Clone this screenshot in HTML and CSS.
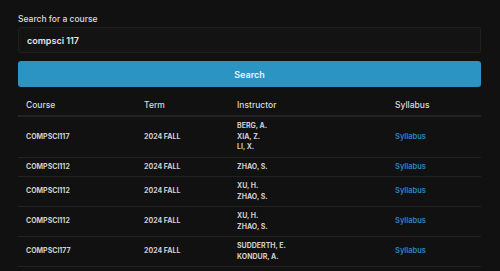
FILE: index.html
```html
<!DOCTYPE html>
<html lang="en">

<head>
  <meta charset="UTF-8">
  <meta name="viewport" content="width=device-width, initial-scale=1.0">
  <title>Course search</title>
  <link rel="stylesheet" href="styles.css">
</head>

<body>
  <div class="wrap">
    <form class="search">
      <label for="q">Search for a course</label>
      <input id="q" type="text" value="compsci 117">
      <button type="button">Search</button>
    </form>

    <table class="results">
      <colgroup>
        <col class="c-course">
        <col class="c-term">
        <col class="c-inst">
        <col class="c-syl">
      </colgroup>
      <thead>
        <tr>
          <th>Course</th>
          <th>Term</th>
          <th>Instructor</th>
          <th>Syllabus</th>
        </tr>
      </thead>
      <tbody>
        <tr>
          <td>COMPSCI117</td>
          <td>2024 FALL</td>
          <td>BERG, A.<br>XIA, Z.<br>LI, X.</td>
          <td><a href="#">Syllabus</a></td>
        </tr>
        <tr>
          <td>COMPSCI112</td>
          <td>2024 FALL</td>
          <td>ZHAO, S.</td>
          <td><a href="#">Syllabus</a></td>
        </tr>
        <tr>
          <td>COMPSCI112</td>
          <td>2024 FALL</td>
          <td>XU, H.<br>ZHAO, S.</td>
          <td><a href="#">Syllabus</a></td>
        </tr>
        <tr>
          <td>COMPSCI112</td>
          <td>2024 FALL</td>
          <td>XU, H.<br>ZHAO, S.</td>
          <td><a href="#">Syllabus</a></td>
        </tr>
        <tr>
          <td>COMPSCI177</td>
          <td>2024 FALL</td>
          <td>SUDDERTH, E.<br>KONDUR, A.</td>
          <td><a href="#">Syllabus</a></td>
        </tr>
      </tbody>
    </table>
  </div>
</body>

</html>
```
FILE: styles.css
```css
html,
body {
  margin: 0;
  background: #111111;
}

body {
  font-family: Inter, "Noto Sans", sans-serif;
  color: #d9d9d9;
}

.wrap {
  padding: 13px 19px 0 18px;
}

.search {
  display: flex;
  flex-direction: column;
}

.search label {
  font-size: 8.5px;
  line-height: 13px;
  font-weight: 500;
  color: #dddddd;
  margin-bottom: 1px;
}

.search input {
  height: 26px;
  box-sizing: border-box;
  padding: 0 8px;
  background: #131313;
  border: 1px solid #1f1f1f;
  border-radius: 3px;
  color: #e6e6e6;
  font-family: inherit;
  font-size: 9px;
  font-weight: 600;
  outline: none;
}

.search button {
  margin-top: 8px;
  height: 26px;
  border: 0;
  border-radius: 3px;
  background: #2b94c3;
  color: #e9f5fb;
  font-family: inherit;
  font-size: 9px;
  font-weight: 600;
}

.results {
  width: 100%;
  margin-top: 7px;
  border-collapse: collapse;
  table-layout: fixed;
}

.c-course {
  width: 118px;
}

.c-term {
  width: 93px;
}

.c-inst {
  width: 158px;
}

.results th {
  text-align: left;
  font-size: 8.5px;
  font-weight: 500;
  color: #dadada;
  padding: 6px 8px 4px;
  line-height: 11px;
  border-bottom: 2px solid #222222;
}

.results td {
  font-size: 7px;
  font-weight: 700;
  color: #cfcfcf;
  padding: 4px 8px;
  line-height: 10.5px;
  border-bottom: 1px solid #222222;
  vertical-align: middle;
}

.results a {
  color: #2c86bc;
  text-decoration: none;
  font-size: 7.5px;
  font-weight: 600;
}
```
